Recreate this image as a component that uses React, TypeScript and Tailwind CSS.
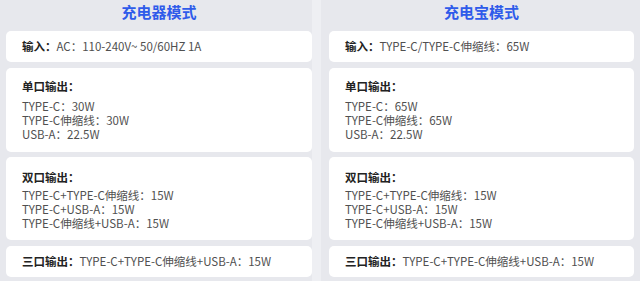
import React from "react";

const font = { fontFamily: '"Noto Sans CJK SC", "Noto Sans", sans-serif' };

type Col = {
  title: string;
  input: string;
  single: string[];
  dual: string[];
  triple: string;
};

const left: Col = {
  title: "充电器模式",
  input: "AC：110-240V~ 50/60HZ 1A",
  single: ["TYPE-C：30W", "TYPE-C伸缩线：30W", "USB-A：22.5W"],
  dual: ["TYPE-C+TYPE-C伸缩线：15W", "TYPE-C+USB-A：15W", "TYPE-C伸缩线+USB-A：15W"],
  triple: "TYPE-C+TYPE-C伸缩线+USB-A：15W",
};

const right: Col = {
  title: "充电宝模式",
  input: "TYPE-C/TYPE-C伸缩线：65W",
  single: ["TYPE-C：65W", "TYPE-C伸缩线：65W", "USB-A：22.5W"],
  dual: ["TYPE-C+TYPE-C伸缩线：15W", "TYPE-C+USB-A：15W", "TYPE-C伸缩线+USB-A：15W"],
  triple: "TYPE-C+TYPE-C伸缩线+USB-A：15W",
};

function Column({ c }: { c: Col }) {
  return (
    <div className="flex flex-col">
      <div className="h-[31px] flex items-center justify-center pb-[8px] text-[15px] font-bold text-[#2f5bea] leading-none">
        {c.title}
      </div>
      <div className="h-[31px] bg-white rounded-[5px] flex items-center px-[16px] text-[11.5px] leading-none whitespace-nowrap">
        <span className="font-bold text-[#222]">输入：</span>
        <span className="text-[#505050]">{c.input}</span>
      </div>
      <div className="mt-[6px] h-[84px] bg-white rounded-[5px] px-[16px] pt-[10px]">
        <div className="text-[11.5px] font-bold text-[#222] leading-[16px]">单口输出：</div>
        <div className="mt-[5px] text-[11.5px] text-[#505050] leading-[14px]">
          {c.single.map((s) => (
            <div key={s}>{s}</div>
          ))}
        </div>
      </div>
      <div className="mt-[5px] h-[83px] bg-white rounded-[5px] px-[16px] pt-[12px]">
        <div className="text-[11.5px] font-bold text-[#222] leading-[16px]">双口输出：</div>
        <div className="mt-[3px] text-[11.5px] text-[#505050] leading-[14px]">
          {c.dual.map((s) => (
            <div key={s}>{s}</div>
          ))}
        </div>
      </div>
      <div className="mt-[6px] h-[31px] bg-white rounded-[5px] flex items-center px-[16px] text-[11.5px] leading-none whitespace-nowrap">
        <span className="font-bold text-[#222]">三口输出：</span>
        <span className="text-[#505050]">{c.triple}</span>
      </div>
    </div>
  );
}

export default function App() {
  return (
    <div className="flex w-[640px] h-[281px] bg-[#e7e8ed] overflow-hidden" style={font}>
      <div className="w-[312px] pl-[6px]">
        <Column c={left} />
      </div>
      <div className="w-[9px] bg-[#eeeff3]" />
      <div className="w-[319px] pl-[8px] pr-[6px]">
        <Column c={right} />
      </div>
    </div>
  );
}
